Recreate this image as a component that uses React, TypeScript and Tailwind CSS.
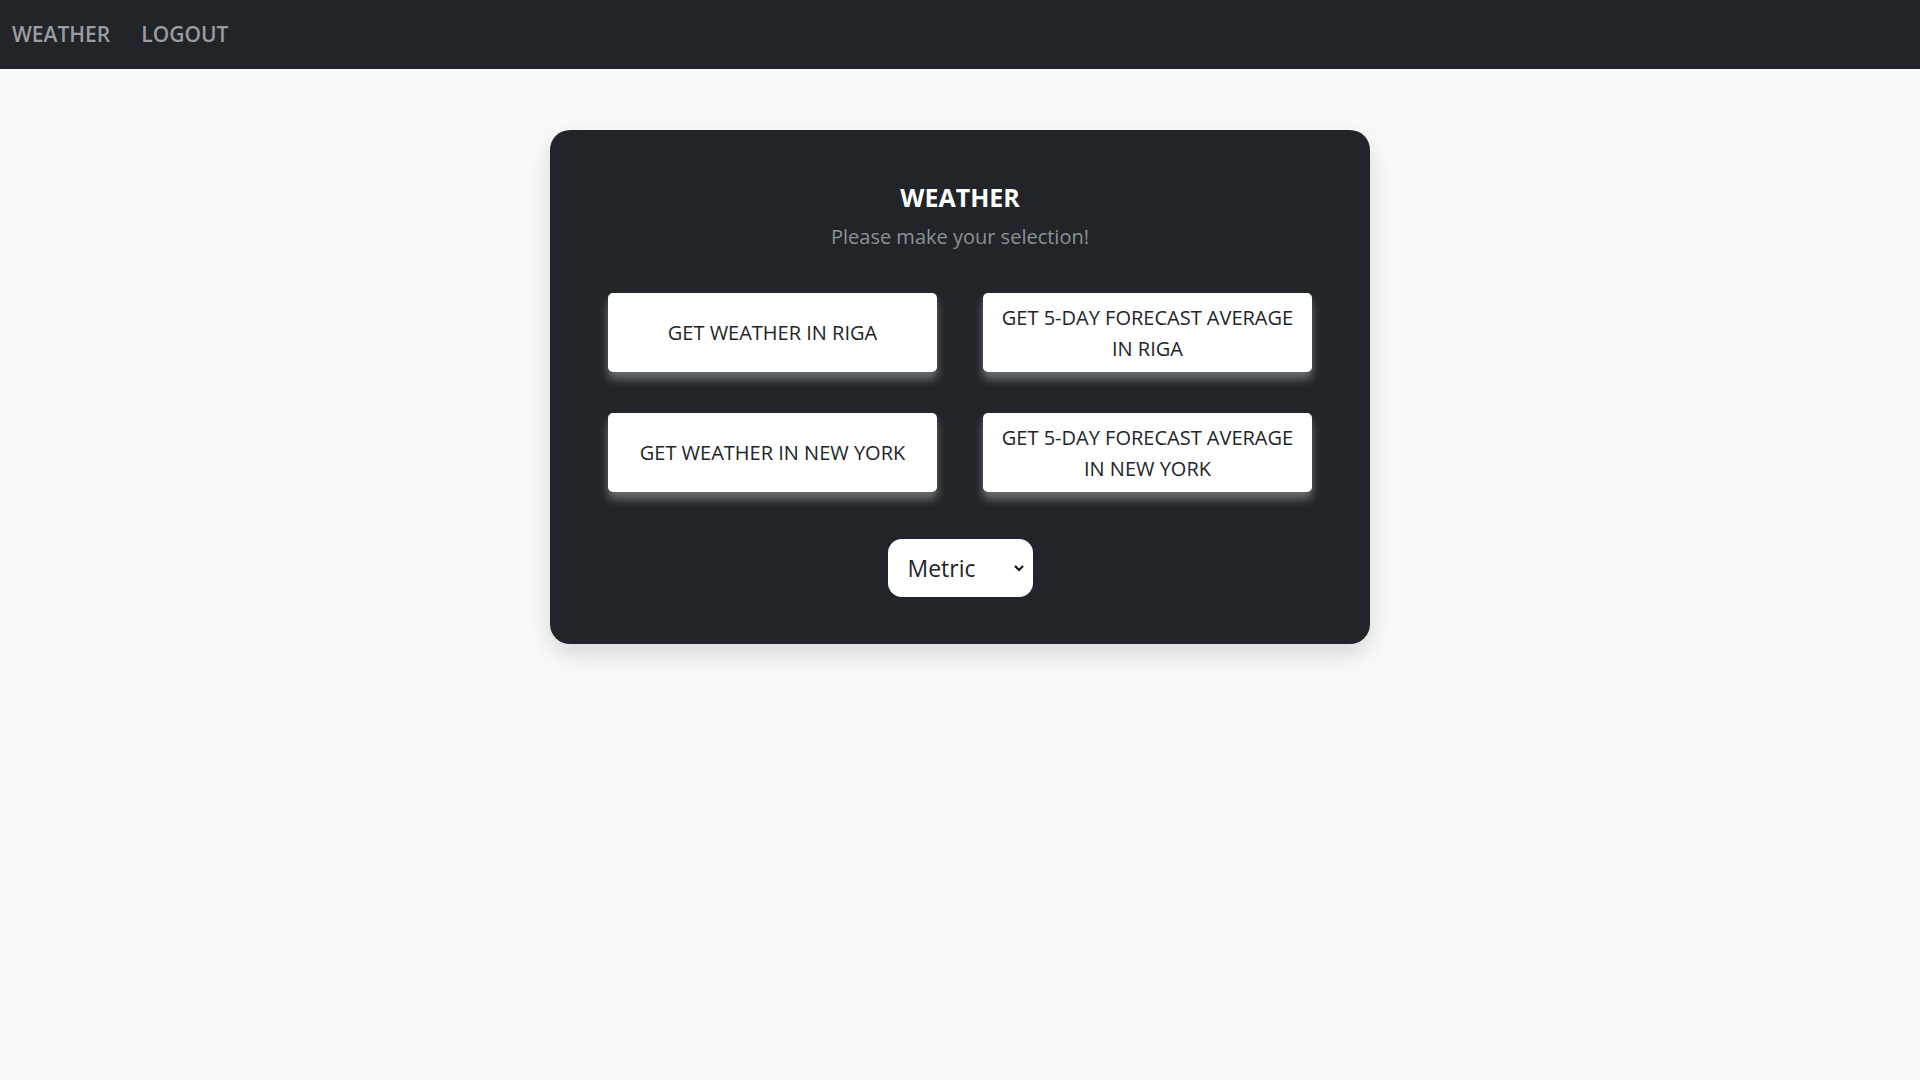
import { useState } from "react";

const buttons = [
  "GET WEATHER IN RIGA",
  "GET 5-DAY FORECAST AVERAGE IN RIGA",
  "GET WEATHER IN NEW YORK",
  "GET 5-DAY FORECAST AVERAGE IN NEW YORK",
];

export default function App() {
  const [units, setUnits] = useState("metric");

  return (
    <div className="min-h-screen bg-[#fafafa] font-['Open_Sans',sans-serif]">
      {/* Navbar */}
      <nav className="h-[69px] bg-[#212529] flex items-center px-3 gap-[31px]">
        <a className="text-[21px] font-semibold text-[#9a9c9f]">WEATHER</a>
        <a className="text-[21px] font-semibold text-[#9a9c9f]">LOGOUT</a>
      </nav>

      <main className="flex justify-center">
        <div className="w-[820px] mt-[61px] bg-[#212529] rounded-[20px] px-[58px] pt-[53px] pb-[47px] shadow-[0_10px_25px_rgba(0,0,0,0.15)] flex flex-col items-center">
          <h1 className="text-[25px] leading-[28px] font-bold text-white">WEATHER</h1>
          <p className="mt-3 text-[20px] leading-[28px] text-[#8d9095]">Please make your selection!</p>

          <div className="mt-[42px] w-full grid grid-cols-2 gap-x-[46px] gap-y-[41px]">
            {buttons.map((b) => (
              <button
                key={b}
                className="h-[79px] bg-white rounded-[5px] px-4 text-[20px] leading-[31px] text-[#212529] shadow-[0_7px_10px_rgba(255,255,255,0.35)]"
              >
                {b}
              </button>
            ))}
          </div>

          <div className="relative mt-[47px]">
            <select
              value={units}
              onChange={(e) => setUnits(e.target.value)}
              className="appearance-none w-[145px] h-[58px] bg-white rounded-[14px] pl-[20px] text-[23px] text-[#212529] outline-none"
            >
              <option value="metric">Metric</option>
              <option value="imperial">Imperial</option>
            </select>
            <svg
              className="absolute right-[8px] top-1/2 -translate-y-1/2 pointer-events-none"
              width="12"
              height="12"
              viewBox="0 0 12 12"
            >
              <path d="M2 4l4 4 4-4" fill="none" stroke="#111" strokeWidth="2.2" />
            </svg>
          </div>
        </div>
      </main>
    </div>
  );
}
